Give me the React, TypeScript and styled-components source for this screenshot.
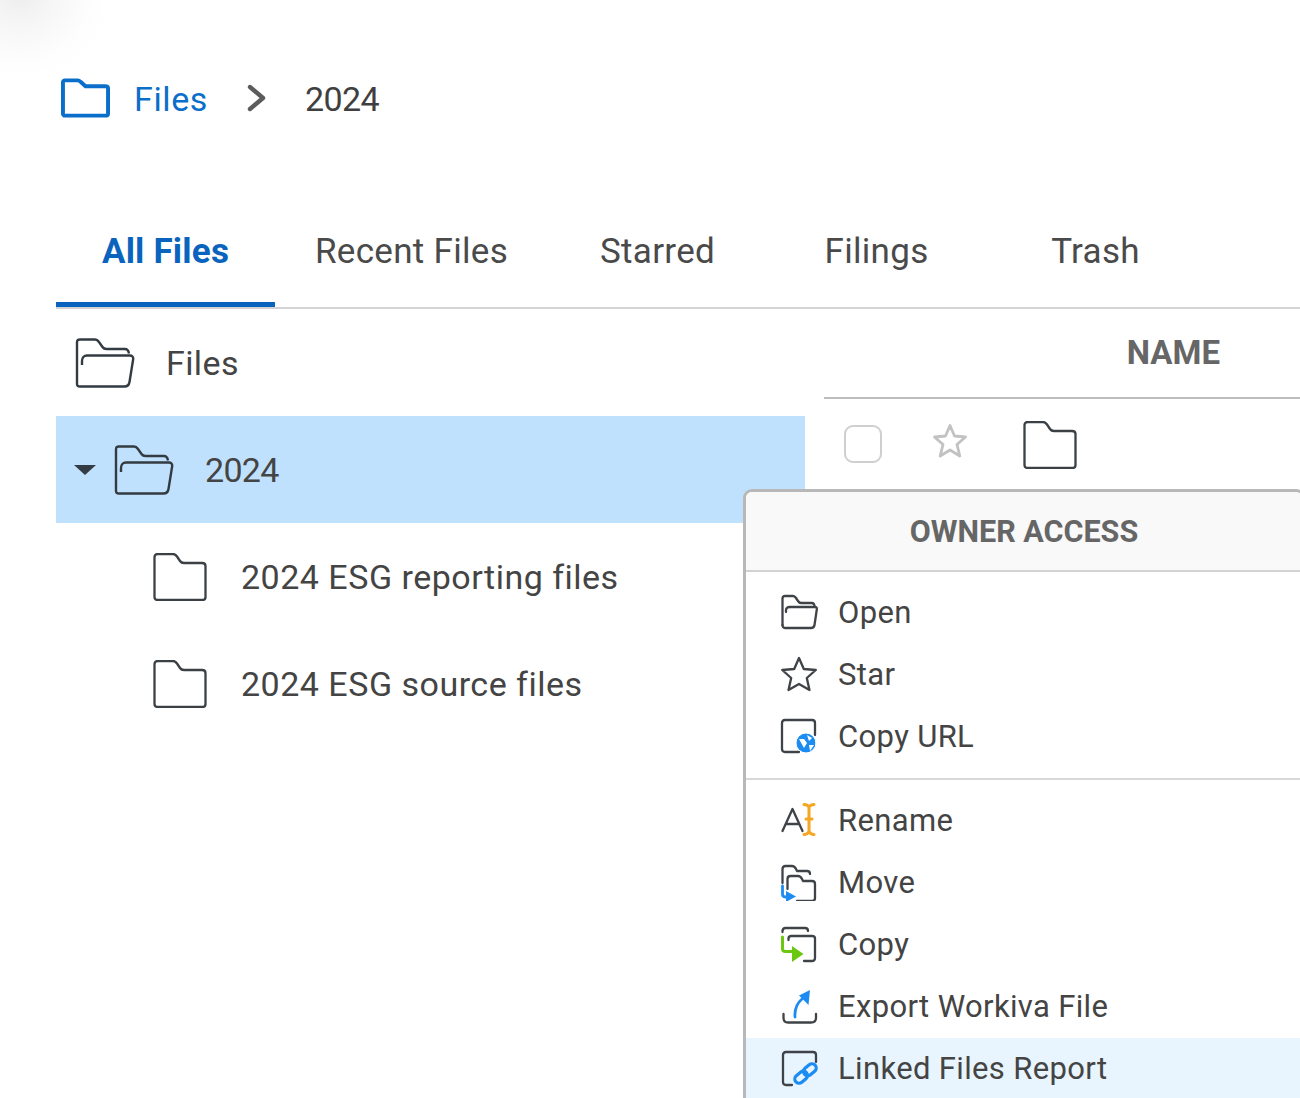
import React from "react";
import styled, { createGlobalStyle } from "styled-components";

const GlobalStyle = createGlobalStyle`
  html, body {
    margin: 0;
    padding: 0;
    background: #fff;
  }
  body {
    font-family: Roboto, "Liberation Sans", sans-serif;
    color: #444;
    overflow: hidden;
  }
`;

const Page = styled.div`
  position: relative;
  width: 1300px;
  height: 1098px;
  overflow: hidden;
  box-sizing: border-box;
  padding-left: 56px;
  background: radial-gradient(circle at 20px -10px, #ececec 0, #f6f6f6 35px, #fdfdfd 70px, #fff 90px);
`;

const Breadcrumb = styled.nav`
  display: flex;
  align-items: center;
  height: 40px;
  padding: 78px 0 0 5px;
  font-size: 34px;
`;

const CrumbLink = styled.a`
  margin-left: 24px;
  padding-top: 2px;
  letter-spacing: 0.6px;
  color: #0a6ecb;
`;

const CrumbCurrent = styled.span`
  margin-left: 37px;
  padding-top: 2px;
  letter-spacing: -0.6px;
  color: #3f3f3f;
`;

const CrumbArrow = styled.svg`
  margin-left: 38px;
  width: 22px;
  height: 30px;
  fill: none;
  stroke: #5c5c5c;
  stroke-width: 4.4;
  stroke-linecap: round;
  stroke-linejoin: round;
`;

const TabBar = styled.div`
  display: flex;
  height: 114px;
  margin-top: 77px;
  box-sizing: border-box;
  border-bottom: 2px solid #d4d4d4;
`;

const Tab = styled.div<{ $active?: boolean }>`
  display: flex;
  justify-content: center;
  align-items: center;
  min-width: 219px;
  height: 112px;
  padding: 6px 40px 0;
  box-sizing: border-box;
  font-size: 35px;
  letter-spacing: ${(p) => (p.$active ? "0.2px" : "0.3px")};
  font-weight: ${(p) => (p.$active ? 700 : 400)};
  color: ${(p) => (p.$active ? "#0a63bd" : "#4a4a4a")};
  border-bottom: 5px solid ${(p) => (p.$active ? "#0a63bd" : "transparent")};
`;

const Body = styled.div`
  display: grid;
  grid-template-columns: 749px 1fr;
  column-gap: 19px;
`;

const Tree = styled.div`
  display: flex;
  flex-direction: column;
`;

const TreeRow = styled.div<{ $selected?: boolean; $indent: number }>`
  display: flex;
  align-items: center;
  height: 107px;
  padding-left: ${(p) => p.$indent}px;
  font-size: 34px;
  color: #444;
  background: ${(p) => (p.$selected ? "#c0e1fd" : "transparent")};
`;

const Caret = styled.span`
  width: 0;
  height: 0;
  margin-right: 18px;
  border-left: 11px solid transparent;
  border-right: 11px solid transparent;
  border-top: 10px solid #333c44;
`;

const TreeLabel = styled.span<{ $gap: number; $spacing?: number }>`
  margin-left: ${(p) => p.$gap}px;
  letter-spacing: ${(p) => p.$spacing ?? 0.5}px;
`;

const FileTable = styled.div`
  display: flex;
  flex-direction: column;
`;

const TableHead = styled.div`
  display: flex;
  justify-content: flex-end;
  align-items: center;
  height: 90px;
  padding: 0 80px 2px 0;
  box-sizing: border-box;
  border-bottom: 2px solid #bdbdbd;
  font-size: 33px;
  font-weight: 700;
  color: #666;
`;

const TableRow = styled.div`
  display: flex;
  align-items: flex-start;
  padding: 22px 0 0 20px;
`;

const Check = styled.span`
  width: 38px;
  height: 38px;
  margin-top: 4px;
  box-sizing: border-box;
  border: 2.5px solid #cfcfcf;
  border-radius: 9px;
`;

const RowStar = styled.svg`
  width: 36px;
  height: 36px;
  margin: 2px 0 0 50px;
  fill: none;
  stroke: #c2c2c2;
  stroke-width: 2.8;
  stroke-linejoin: round;
`;

const RowFolder = styled.svg`
  width: 54px;
  height: 48px;
  margin-left: 55px;
  fill: none;
  stroke: #3b4045;
  stroke-width: 2.3;
`;

const Menu = styled.div`
  position: absolute;
  left: 743px;
  top: 489px;
  width: 562px;
  height: 660px;
  box-sizing: border-box;
  background: #fff;
  border: 3px solid #b8b8b8;
  border-radius: 9px;
  overflow: hidden;
`;

const MenuHead = styled.div`
  display: flex;
  justify-content: center;
  align-items: center;
  height: 80px;
  box-sizing: border-box;
  background: #f9f9f9;
  border-bottom: 2px solid #d2d2d2;
  font-size: 30.500px;
  font-weight: 700;
  color: #666;
`;

const MenuGroup = styled.div<{ $divided?: boolean }>`
  display: flex;
  flex-direction: column;
  padding: 10px 0;
  border-top: ${(p) => (p.$divided ? "2px solid #d8d8d8" : "none")};
`;

const MenuItem = styled.div<{ $hover?: boolean }>`
  display: flex;
  align-items: center;
  gap: 20px;
  height: 62px;
  box-sizing: border-box;
  padding: 0 0 2px 34px;
  font-size: 31px;
  letter-spacing: 0.35px;
  color: #444;
  background: ${(p) => (p.$hover ? "#e8f4fe" : "transparent")};
`;

const MenuIcon = styled.svg`
  flex: none;
  width: 38px;
  height: 38px;
  fill: none;
  stroke: #3f4347;
  stroke-width: 2.3;
  stroke-linecap: round;
  stroke-linejoin: round;
`;

const OpenFolder: React.FC = () => (
  <svg viewBox="0 0 60 50" width="60" height="50" fill="none" stroke="#333b42" strokeWidth="2.4" strokeLinejoin="round">
    <path d="M2 46V4.500C2 2.500 3.200 1.500 5 1.500H20C22 1.500 23 2.500 24 4L27.500 9C28.500 10.500 29.500 11 31.500 11H50C52.500 11 53.500 12.500 54 15.500" />
    <path d="M7 27V23C7 20 9 17.500 12 17.500H55C57 17.500 58.500 19 58.200 21L54.500 44C54 47 52 48.500 49.500 48.500H5C3 48.500 2 47.500 2 46" />
  </svg>
);

const FOLDER = "M1.500 44V4C1.500 2.500 2.500 1 4.500 1H20C22 1 23 2 24 3.500L27 8C28 9.500 29 10 31 10H49C51.500 10 52.500 11.500 52.500 13V44C52.500 46 51.500 47 49.500 47H4.500C2.500 47 1.500 46 1.500 44Z";

const ChildFolder = styled(RowFolder)`
  margin-left: 0;
`;

const STAR = "M18 2.500L22.500 13L33.500 14L25 21.500L27.800 33L18 27L8.200 33L11 21.500L2.500 14L13.500 13Z";

export default function App() {
  return (
    <Page>
      <GlobalStyle />
      <Breadcrumb>
        <svg viewBox="0 0 50 40" width="49" height="40" fill="none" stroke="#0a6ecb" strokeWidth="4" strokeLinejoin="round">
          <path d="M2 36V4C2 3 3 2 4 2H17C18 2 19 2.500 20 3.500L25 8H45C47 8 48 9 48 10V36C48 37 47 38 45 38H4C3 38 2 37 2 36Z" />
        </svg>
        <CrumbLink>Files</CrumbLink>
        <CrumbArrow viewBox="0 0 22 30">
          <path d="M4 4L17 15L4 26" />
        </CrumbArrow>
        <CrumbCurrent>2024</CrumbCurrent>
      </Breadcrumb>

      <TabBar>
        <Tab $active>All Files</Tab>
        <Tab>Recent Files</Tab>
        <Tab>Starred</Tab>
        <Tab>Filings</Tab>
        <Tab>Trash</Tab>
      </TabBar>

      <Body>
        <Tree>
          <TreeRow $indent={19}>
            <OpenFolder />
            <TreeLabel $gap={31} $spacing={0.4}>Files</TreeLabel>
          </TreeRow>
          <TreeRow $selected $indent={18}>
            <Caret />
            <OpenFolder />
            <TreeLabel $gap={31} $spacing={-0.7}>2024</TreeLabel>
          </TreeRow>
          <TreeRow $indent={97}>
            <ChildFolder viewBox="0 0 54 48"><path d={FOLDER} /></ChildFolder>
            <TreeLabel $gap={34}>2024 ESG reporting files</TreeLabel>
          </TreeRow>
          <TreeRow $indent={97}>
            <ChildFolder viewBox="0 0 54 48"><path d={FOLDER} /></ChildFolder>
            <TreeLabel $gap={34}>2024 ESG source files</TreeLabel>
          </TreeRow>
        </Tree>

        <FileTable>
          <TableHead>NAME</TableHead>
          <TableRow>
            <Check />
            <RowStar viewBox="0 0 36 36">
              <path d={STAR} />
            </RowStar>
            <RowFolder viewBox="0 0 54 48"><path d={FOLDER} /></RowFolder>
          </TableRow>
        </FileTable>
      </Body>

      <Menu>
        <MenuHead>OWNER ACCESS</MenuHead>
        <MenuGroup>
          <MenuItem>
            <MenuIcon viewBox="0 0 38 38">
              <path d="M2.500 32V5.500C2.500 4 3.500 3 5 3H13C14.500 3 15 3.500 16 5L18 8C19 9.500 19.500 10 21 10H32C33.500 10 34 11 34.500 12.500" />
              <path d="M6 19V17C6 15.500 7.500 14 9.500 14H35C36.500 14 37 15 36.800 16.500L34.500 32C34.200 34 33 35 31 35H5C3.500 35 2.500 34 2.500 32" />
            </MenuIcon>
            Open
          </MenuItem>
          <MenuItem>
            <MenuIcon viewBox="0 0 38 38">
              <path d="M19 3L23.800 14L35.800 15L26.800 23L29.500 35L19 29L8.500 35L11.200 23L2.200 15L14.200 14Z" />
            </MenuIcon>
            Star
          </MenuItem>
          <MenuItem>
            <MenuIcon viewBox="0 0 38 38">
              <path d="M19 35H5C3 35 2 34 2 32V6C2 4 3 3 5 3H32C34 3 35 4 35 6V18" />
              <circle cx="26" cy="26" r="10" fill="#1c8cf2" stroke="#fff" strokeWidth="1" />
              <path d="M19 22L24 22L27 26L24 31ZM27 18L32 21L29 24ZM29 28L34 28L30 34Z" fill="#fff" stroke="none" />
            </MenuIcon>
            Copy URL
          </MenuItem>
        </MenuGroup>
        <MenuGroup $divided>
          <MenuItem>
            <MenuIcon viewBox="0 0 38 38">
              <path d="M2.500 30L12.500 8L22.500 30M6 23H19" />
              <path d="M24 3.500C26.500 3.500 28 4.500 29 6V30.500C28 32.500 26.500 33.500 24 33.500M34 3.500C31.500 3.500 30 4.500 29 6M29 30.500C30 32.500 31.500 33.500 34 33.500M26 18H32" stroke="#f5a623" strokeWidth="3" />
            </MenuIcon>
            Rename
          </MenuItem>
          <MenuItem>
            <MenuIcon viewBox="0 0 38 38">
              <path d="M2.500 20V6C2.500 4 3.500 3 5.500 3H12C14 3 15 4 16 6L17 8H27C29 8 30 9 30 11" />
              <path d="M7.500 26V16C7.500 14 8.500 13 10.500 13H18C20 13 21 14 22 16L23 18H32C34 18 35 19 35 21V35C35 37 34 38 32 38H17" />
              <path d="M2.500 23V31C2.500 33 3.500 34 5.500 34H8" stroke="#1c8cf2" strokeWidth="2.800" />
              <path d="M6 28L16 33.500L6 39Z" fill="#1c8cf2" stroke="none" />
            </MenuIcon>
            Move
          </MenuItem>
          <MenuItem>
            <MenuIcon viewBox="0 0 38 38">
              <path d="M2.500 7V6C2.500 4 3.500 3 5.500 3H25C27 3 28 4 28 6" />
              <path d="M8.500 15V13.500C8.500 12 9.500 11 11.500 11H32C34 11 35 12 35 13.500V33C35 35 34 36 32 36H24" />
              <path d="M2.500 12V24C2.500 25.500 3.500 26.500 5.500 26.500H13" stroke="#6cc70f" strokeWidth="3" />
              <path d="M12 21L23.500 29L12 37Z" fill="#6cc70f" stroke="none" />
            </MenuIcon>
            Copy
          </MenuItem>
          <MenuItem>
            <MenuIcon viewBox="0 0 38 38">
              <path d="M3.500 27V31C3.500 34 5 35.500 8 35.500H31C34 35.500 36 34 36 31V27" />
              <path d="M15 30C14.500 23 16 17 22 12" stroke="#1c8cf2" strokeWidth="2.800" />
              <path d="M19 8.500L30 3L28.500 18Z" fill="#1c8cf2" stroke="none" />
            </MenuIcon>
            Export Workiva File
          </MenuItem>
          <MenuItem $hover>
            <MenuIcon viewBox="0 0 38 38">
              <path d="M12 36H6C4 36 3 35 3 33V6C3 4 4 3 6 3H33C35 3 36 4 36 6V13" />
              <g stroke="#1c8cf2" strokeWidth="3.200">
                <rect x="14" y="24" width="14" height="8.500" rx="4.250" transform="rotate(-40 21 28)" />
                <rect x="23" y="16.500" width="14" height="8.500" rx="4.250" transform="rotate(-40 30 21)" />
              </g>
            </MenuIcon>
            Linked Files Report
          </MenuItem>
        </MenuGroup>
      </Menu>
    </Page>
  );
}
